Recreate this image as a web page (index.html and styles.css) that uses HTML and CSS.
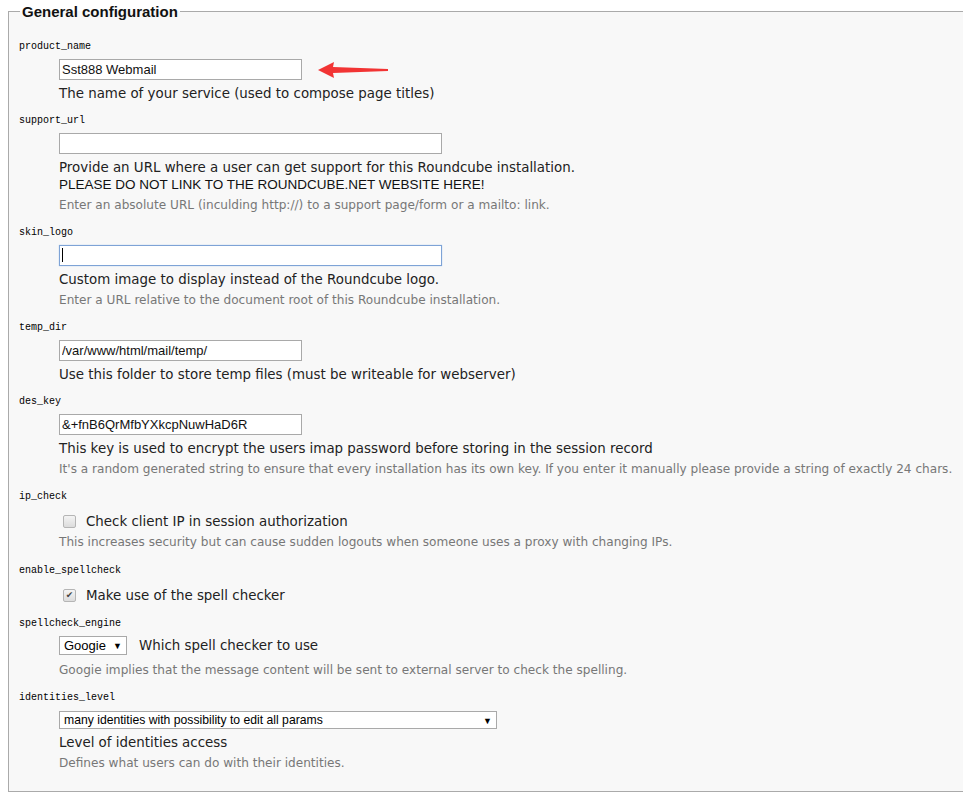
FILE: index.html
```html
<!DOCTYPE html>
<html lang="en">
<head>
    <meta charset="UTF-8">
    <title>Roundcube Webmail Installer</title>
    <link rel="stylesheet" href="styles.css">
</head>
<body>
    <form class="config-form">
        <fieldset class="config-group">
            <legend>General configuration</legend>
            <dl class="config-list">

                <dt>product_name</dt>
                <dd>
                    <div class="field-row">
                        <input type="text" class="text-input short" value="Sst888 Webmail">
                        <svg class="pointer" width="72" height="18" viewBox="0 0 72 18">
                            <polygon points="1,9 17,1 16,6 71,8 71,10 16,12 17,17" fill="#f23434"/>
                        </svg>
                    </div>
                    <div class="desc">The name of your service (used to compose page titles)</div>
                </dd>

                <dt>support_url</dt>
                <dd>
                    <input type="text" class="text-input long" value="">
                    <div class="desc">Provide an URL where a user can get support for this Roundcube installation.</div>
                    <div class="warn">PLEASE DO NOT LINK TO THE ROUNDCUBE.NET WEBSITE HERE!</div>
                    <p class="hint">Enter an absolute URL (inculding http://) to a support page/form or a mailto: link.</p>
                </dd>

                <dt>skin_logo</dt>
                <dd>
                    <div class="text-input long focused"><span class="caret"></span></div>
                    <div class="desc">Custom image to display instead of the Roundcube logo.</div>
                    <p class="hint">Enter a URL relative to the document root of this Roundcube installation.</p>
                </dd>

                <dt>temp_dir</dt>
                <dd>
                    <input type="text" class="text-input short" value="/var/www/html/mail/temp/">
                    <div class="desc">Use this folder to store temp files (must be writeable for webserver)</div>
                </dd>

                <dt>des_key</dt>
                <dd>
                    <input type="text" class="text-input short" value="&amp;+fnB6QrMfbYXkcpNuwHaD6R">
                    <div class="desc">This key is used to encrypt the users imap password before storing in the session record</div>
                    <p class="hint">It's a random generated string to ensure that every installation has its own key. If you enter it manually please provide a string of exactly 24 chars.</p>
                </dd>

                <dt>ip_check</dt>
                <dd class="check-dd">
                    <label class="check-row"><span class="checkbox"></span>Check client IP in session authorization</label>
                    <p class="hint">This increases security but can cause sudden logouts when someone uses a proxy with changing IPs.</p>
                </dd>

                <dt>enable_spellcheck</dt>
                <dd class="check-dd">
                    <label class="check-row"><span class="checkbox checked">&#10004;</span>Make use of the spell checker</label>
                </dd>

                <dt>spellcheck_engine</dt>
                <dd>
                    <div class="field-row">
                        <div class="select-box small">Googie<span class="arrow">&#9660;</span></div>
                        <span class="desc inline">Which spell checker to use</span>
                    </div>
                    <p class="hint after-select">Googie implies that the message content will be sent to external server to check the spelling.</p>
                </dd>

                <dt>identities_level</dt>
                <dd class="last">
                    <div class="select-box wide">many identities with possibility to edit all params<span class="arrow">&#9660;</span></div>
                    <div class="desc">Level of identities access</div>
                    <p class="hint">Defines what users can do with their identities.</p>
                </dd>

            </dl>
        </fieldset>
    </form>
</body>
</html>
```

FILE: styles.css
```css
* {
    box-sizing: border-box;
}

body {
    margin: 0;
    padding: 0;
    background: #fff;
    font-family: "DejaVu Sans", Verdana, sans-serif;
    font-size: 13.4px;
    color: #222;
}

.config-form {
    padding: 0 0 0 8px;
}

.config-group {
    margin: 3px -20px 0 0;
    padding: 0 10px 7px 10px;
    border: 1px solid #aaa;
    background: #f8f8f8;
}

.config-group legend {
    padding: 0 2px;
    margin-left: 1px;
    font-family: "Liberation Sans", Arial, sans-serif;
    font-weight: bold;
    font-size: 15px;
    color: #111;
}

.config-list {
    margin: 0;
    padding-top: 20px;
}

.config-list dt {
    font-family: "Liberation Mono", monospace;
    font-size: 10px;
    line-height: 14px;
    color: #000;
}

.config-list dd {
    margin: 5px 0 12px 40px;
}

.config-list dd.check-dd {
    margin-top: 8px;
    margin-bottom: 13px;
}

.config-list dd.last {
    margin-top: 6px;
}

.field-row {
    display: flex;
    align-items: center;
}

.text-input {
    display: block;
    height: 21px;
    padding: 1px 2px;
    border: 1px solid #a9a9a9;
    background: #fff;
    font-family: "Liberation Sans", Arial, sans-serif;
    font-size: 13px;
    color: #111;
}

.text-input.short {
    width: 243px;
}

.text-input.long {
    width: 383px;
}

.text-input.focused {
    border-color: #7ea3d6;
    box-shadow: 0 0 1px #9fc0ea;
    padding: 2px 2px;
}

.caret {
    display: block;
    width: 1px;
    height: 14px;
    background: #000;
}

.pointer {
    margin-left: 15px;
}

.desc {
    margin-top: 5px;
    line-height: 17px;
    color: #222;
}

.desc.inline {
    margin: 0 0 0 12px;
}

.warn {
    font-family: "Liberation Sans", Arial, sans-serif;
    font-size: 13.5px;
    line-height: 17px;
    color: #111;
}

.hint {
    margin: 3px 0 0 0;
    font-size: 12.1px;
    line-height: 18px;
    color: #777;
}

.hint.after-select {
    margin-top: 6px;
}

.check-row {
    display: flex;
    align-items: center;
    height: 18px;
}

.checkbox {
    width: 13px;
    height: 13px;
    margin: 0 10px 0 4px;
    border: 1px solid #b5b5b5;
    border-radius: 2px;
    background: linear-gradient(#f4f4f4, #dcdcdc);
    font-size: 9px;
    line-height: 11px;
    text-align: center;
    color: #444;
}

.select-box {
    position: relative;
    height: 19px;
    padding: 1px 4px;
    border: 1px solid #a9a9a9;
    background: #fff;
    font-family: "Liberation Sans", Arial, sans-serif;
    font-size: 13px;
    line-height: 15px;
    color: #000;
}

.select-box.small {
    width: 68px;
}

.select-box.wide {
    width: 438px;
    height: 18px;
    font-size: 12.2px;
    line-height: 14px;
    margin-top: 2px;
}

.select-box .arrow {
    position: absolute;
    right: 4px;
    top: 2px;
    font-size: 9px;
}
```
